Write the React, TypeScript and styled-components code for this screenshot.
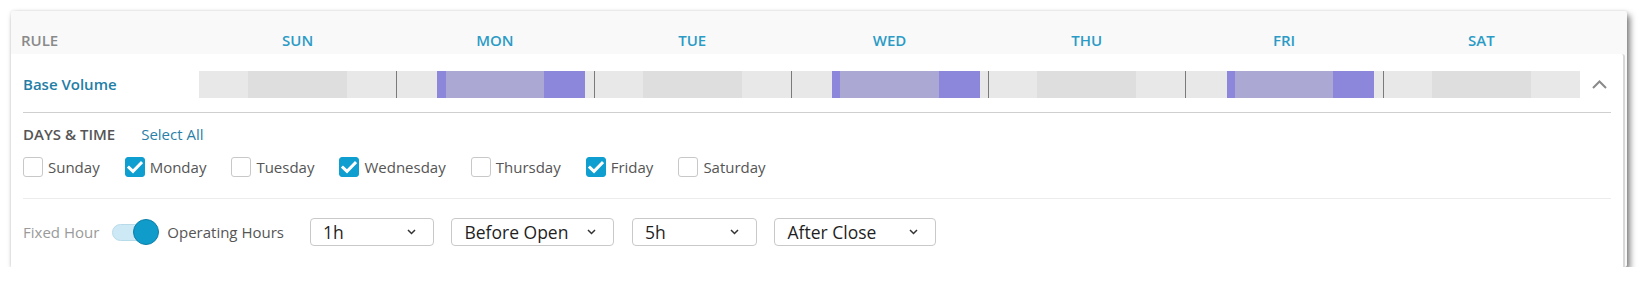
import React from 'react';
import styled, { createGlobalStyle } from 'styled-components';

const Global = createGlobalStyle`
  html, body { margin: 0; padding: 0; background: #ffffff; }
  body { font-family: "Open Sans", "Noto Sans", sans-serif; }
`;

const Page = styled.div`
  padding: 11px 0 0 11px;
`;

const Card = styled.div`
  width: 1616px;
  height: 256px;
  box-sizing: border-box;
  background: #f9f9f9;
  border-radius: 2px;
  box-shadow: 3px 4px 6px rgba(0, 0, 0, 0.5), 0 0 3px rgba(0, 0, 0, 0.12);
  display: flex;
  flex-direction: column;
`;

const Header = styled.div`
  display: grid;
  grid-template-columns: 188px repeat(7, 1fr) 47px;
  height: 43px;
  box-sizing: border-box;
  align-items: end;
  padding-bottom: 4px;
`;

const HeaderCell = styled.div<{ $rule?: boolean }>`
  font-size: 15px;
  line-height: 20px;
  font-weight: 600;
  color: ${(p) => (p.$rule ? '#8a8a8a' : '#2b9bc6')};
  text-align: ${(p) => (p.$rule ? 'left' : 'center')};
  padding-left: ${(p) => (p.$rule ? '10px' : '0')};
`;

const Body = styled.div`
  flex: 1;
  background: #ffffff;
  margin-right: 2px;
  border-right: 2px solid #d8d8d8;
  border-top-right-radius: 3px;
  padding: 0 12px;
`;

const RuleRow = styled.div`
  display: grid;
  grid-template-columns: 176px 1381px 1fr;
  align-items: center;
  padding: 17px 0 14px;
  border-bottom: 1px solid #cfcfcf;
`;

const RuleName = styled.div`
  font-size: 15px;
  font-weight: 600;
  color: #1f7ea6;
  line-height: 20px;
  margin-top: -1px;
`;

const Timeline = styled.div`
  display: flex;
  height: 27px;
`;

const Day = styled.div<{ $divider: boolean }>`
  position: relative;
  flex: 1 1 0;
  display: flex;
  &::before {
    content: '';
    display: ${(p) => (p.$divider ? 'block' : 'none')};
    position: absolute;
    left: 0;
    top: 0;
    bottom: 0;
    width: 1px;
    background: #7a7a7a;
  }
`;

const Seg = styled.div<{ $h: number; $c: string }>`
  flex: ${(p) => p.$h} 0 0;
  background: ${(p) => p.$c};
`;

const Collapse = styled.div`
  display: flex;
  justify-content: flex-end;
  align-items: center;
  padding-right: 4px;
`;

const TitleRow = styled.div`
  display: flex;
  align-items: center;
  gap: 26px;
  padding-top: 11px;
  line-height: 20px;
  font-size: 15px;
`;

const SectionTitle = styled.span`
  font-weight: 600;
  color: #555555;
`;

const LinkText = styled.span`
  color: #2a7fa8;
`;

const CheckRow = styled.div`
  display: flex;
  align-items: center;
  gap: 25px;
  margin-top: 13px;
  padding-bottom: 21px;
  border-bottom: 1px solid #ececec;
`;

const CheckItem = styled.label`
  display: flex;
  align-items: center;
  gap: 5px;
  font-size: 15px;
  line-height: 20px;
  color: #555555;
`;

const Box = styled.span<{ $on: boolean }>`
  width: 20px;
  height: 20px;
  box-sizing: border-box;
  border-radius: 3px;
  border: 1px solid ${(p) => (p.$on ? '#0e9ecf' : '#c8c8c8')};
  background: ${(p) => (p.$on ? '#0e9ecf' : '#ffffff')};
  display: flex;
  align-items: center;
  justify-content: center;
`;

const ControlsRow = styled.div`
  display: flex;
  align-items: center;
  padding-top: 19px;
  font-size: 15px;
`;

const MutedLabel = styled.span`
  color: #9a9a9a;
  margin-right: 13px;
`;

const ToggleWrap = styled.div`
  position: relative;
  width: 47px;
  height: 26px;
  &::before {
    content: '';
    position: absolute;
    left: 0;
    top: 5px;
    width: 42px;
    height: 17px;
    box-sizing: border-box;
    border-radius: 9px;
    background: #cde9f5;
    border: 1px solid #b8dbea;
  }
`;

const Knob = styled.span`
  position: absolute;
  right: 0;
  top: 0;
  width: 26px;
  height: 26px;
  box-sizing: border-box;
  border-radius: 50%;
  background: #0f9ccb;
  border: 1px solid #0b7fa8;
`;

const OnLabel = styled.span`
  color: #555555;
  margin-left: 8px;
  margin-right: 26px;
`;

const Selects = styled.div`
  display: flex;
  gap: 17.5px;
`;

const SelectBox = styled.div<{ $w: number }>`
  width: ${(p) => p.$w}px;
  height: 28px;
  box-sizing: border-box;
  border: 1px solid #c9c9c9;
  border-radius: 4px;
  padding: 0 17px 0 12px;
  display: flex;
  align-items: center;
  justify-content: space-between;
  font-size: 17.5px;
  color: #1f1f1f;
`;

const LIGHT = '#e8e8e8';
const DARK = '#dedede';
const PUR = '#8c87da';
const PUR_L = '#aba8d3';

const days = ['SUN', 'MON', 'TUE', 'WED', 'THU', 'FRI', 'SAT'];
const active = [false, true, false, true, false, true, false];
const fullDays = ['Sunday', 'Monday', 'Tuesday', 'Wednesday', 'Thursday', 'Friday', 'Saturday'];

const offSegs: [number, string][] = [
  [6, LIGHT],
  [12, DARK],
  [6, LIGHT],
];
const onSegs: [number, string][] = [
  [5, LIGHT],
  [1, PUR],
  [12, PUR_L],
  [5, PUR],
  [1, LIGHT],
];

const Check = () => (
  <svg width="16" height="13" viewBox="0 0 16 13">
    <polyline points="2,6.5 6,10.3 14,2.2" fill="none" stroke="#fff" strokeWidth="3" strokeLinecap="square" />
  </svg>
);

const ChevronDown = () => (
  <svg width="9" height="6" viewBox="0 0 9 6">
    <polyline points="1,1 4.5,4.5 8,1" fill="none" stroke="#333" strokeWidth="1.5" />
  </svg>
);

const ChevronUp = () => (
  <svg width="15" height="9" viewBox="0 0 15 9">
    <polyline points="1,8 7.5,1.5 14,8" fill="none" stroke="#8a8a8a" strokeWidth="2" />
  </svg>
);

const selects: [string, number][] = [
  ['1h', 124],
  ['Before Open', 163],
  ['5h', 125],
  ['After Close', 162],
];

export default function App() {
  return (
    <>
      <Global />
      <Page>
        <Card>
          <Header>
            <HeaderCell $rule>RULE</HeaderCell>
            {days.map((d) => (
              <HeaderCell key={d}>{d}</HeaderCell>
            ))}
            <div />
          </Header>
          <Body>
            <RuleRow>
              <RuleName>Base Volume</RuleName>
              <Timeline>
                {days.map((d, i) => (
                  <Day key={d} $divider={i > 0}>
                    {(active[i] ? onSegs : offSegs).map(([h, c], j) => (
                      <Seg key={j} $h={h} $c={c} />
                    ))}
                  </Day>
                ))}
              </Timeline>
              <Collapse>
                <ChevronUp />
              </Collapse>
            </RuleRow>
            <TitleRow>
              <SectionTitle>DAYS &amp; TIME</SectionTitle>
              <LinkText>Select All</LinkText>
            </TitleRow>
            <CheckRow>
              {fullDays.map((d, i) => (
                <CheckItem key={d}>
                  <Box $on={active[i]}>{active[i] && <Check />}</Box>
                  {d}
                </CheckItem>
              ))}
            </CheckRow>
            <ControlsRow>
              <MutedLabel>Fixed Hour</MutedLabel>
              <ToggleWrap>
                <Knob />
              </ToggleWrap>
              <OnLabel>Operating Hours</OnLabel>
              <Selects>
                {selects.map(([t, w]) => (
                  <SelectBox key={t} $w={w}>
                    <span>{t}</span>
                    <ChevronDown />
                  </SelectBox>
                ))}
              </Selects>
            </ControlsRow>
          </Body>
        </Card>
      </Page>
    </>
  );
}
